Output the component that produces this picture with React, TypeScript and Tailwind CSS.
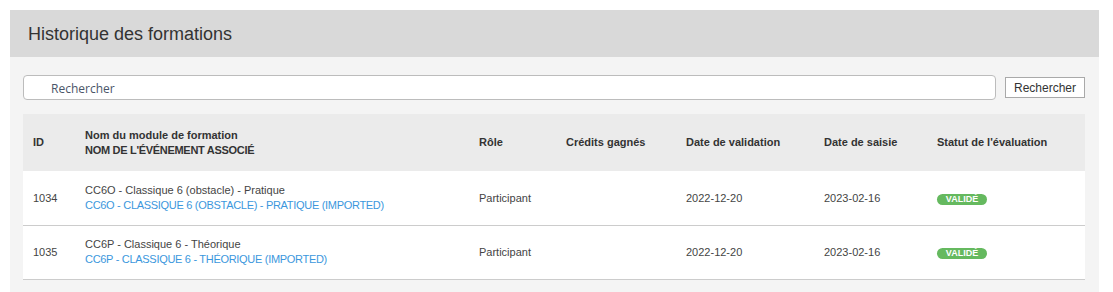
import React from 'react';

const rows = [
  {
    id: '1034',
    name: 'CC6O - Classique 6 (obstacle) - Pratique',
    event: 'CC6O - CLASSIQUE 6 (OBSTACLE) - PRATIQUE (IMPORTED)',
    role: 'Participant',
    credits: '',
    validated: '2022-12-20',
    entered: '2023-02-16',
  },
  {
    id: '1035',
    name: 'CC6P - Classique 6 - Théorique',
    event: 'CC6P - CLASSIQUE 6 - THÉORIQUE (IMPORTED)',
    role: 'Participant',
    credits: '',
    validated: '2022-12-20',
    entered: '2023-02-16',
  },
];

export default function App() {
  return (
    <div className="min-h-[292px] bg-white pt-[10px] pl-[10px] pr-[14px] font-['Liberation_Sans',Arial,sans-serif] text-[#333]">
      <div className="w-[1089px] bg-[#f4f4f4]">
        <div className="flex h-[47px] items-center bg-[#d9d9d9] px-[18px]">
          <h1 className="text-[18px] leading-none text-[#333]">Historique des formations</h1>
        </div>

        <div className="px-[13px] pt-[18px] pb-[14px]">
          {/* search */}
          <div className="flex items-center gap-[9px] pr-[1px]">
            <input
              type="text"
              placeholder="Rechercher"
              className="h-[25px] flex-1 rounded-[4px] border border-[#bcbcbc] bg-white pt-[1px] pl-[27px] font-['Open_Sans',sans-serif] text-[12px] text-[#4a5568] outline-none placeholder:text-[#4a5568]"
            />
            <button className="h-[21px] w-[80px] border border-[#a9a9a9] bg-white text-[12px] text-[#333]">
              Rechercher
            </button>
          </div>

          {/* table */}
          <table className="mt-[14px] w-[1062px] table-fixed border-collapse text-[11px]">
            <colgroup>
              <col className="w-[52px]" />
              <col className="w-[394px]" />
              <col className="w-[87px]" />
              <col className="w-[120px]" />
              <col className="w-[138px]" />
              <col className="w-[113px]" />
              <col className="w-[158px]" />
            </colgroup>
            <thead>
              <tr className="h-[57px] bg-[#ebebeb] text-left font-bold text-[#333]">
                <th className="pl-[10px] font-bold">ID</th>
                <th className="pl-[10px] font-bold leading-[15px]">
                  <div>Nom du module de formation</div>
                  <div className="tracking-[-0.3px]">NOM DE L'ÉVÉNEMENT ASSOCIÉ</div>
                </th>
                <th className="pl-[10px] font-bold">Rôle</th>
                <th className="pl-[10px] font-bold">Crédits gagnés</th>
                <th className="pl-[10px] font-bold">Date de validation</th>
                <th className="pl-[10px] font-bold">Date de saisie</th>
                <th className="pl-[10px] font-bold">Statut de l'évaluation</th>
              </tr>
            </thead>
            <tbody>
              {rows.map(r => (
                <tr key={r.id} className="h-[54px] border-b border-[#cccccc] bg-white text-[#444]">
                  <td className="pl-[10px]">{r.id}</td>
                  <td className="pl-[10px] leading-[15px]">
                    <div>{r.name}</div>
                    <div className="tracking-[-0.3px] text-[#3b97dd]">{r.event}</div>
                  </td>
                  <td className="pl-[10px]">{r.role}</td>
                  <td className="pl-[10px]">{r.credits}</td>
                  <td className="pl-[10px]">{r.validated}</td>
                  <td className="pl-[10px]">{r.entered}</td>
                  <td className="pl-[10px]">
                    <span className="inline-flex h-[11px] w-[50px] items-center justify-center rounded-full bg-[#65b95f] text-[9px] font-bold leading-none text-white">
                      VALIDÉ
                    </span>
                  </td>
                </tr>
              ))}
            </tbody>
          </table>
        </div>
      </div>
    </div>
  );
}
